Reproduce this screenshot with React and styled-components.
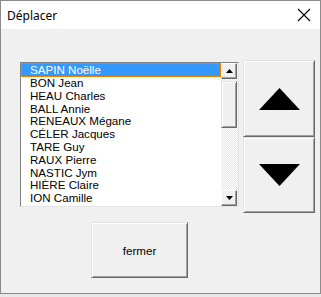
import React from "react";
import styled, { createGlobalStyle } from "styled-components";

const Global = createGlobalStyle`
  html, body { margin: 0; padding: 0; background: #e9e9e9; }
  * { box-sizing: border-box; }
`;

const Frame = styled.div`
  width: 321px;
  height: 294px;
  border: 1px solid #8c8c8c;
  background: #f0f0f0;
  display: flex;
  flex-direction: column;
`;

const TitleBar = styled.div`
  height: 28px;
  background: #fff;
  display: flex;
  align-items: center;
  justify-content: space-between;
  padding: 0 9px 0 6px;
  font-family: "Noto Sans", "Open Sans", sans-serif;
  font-size: 12px;
  color: #000;
`;

const Body = styled.div`
  flex: 1;
  display: flex;
  flex-direction: column;
  padding: 31px 0 0 19px;
`;

const Row = styled.div`
  display: flex;
  align-items: flex-start;
  gap: 4px;
`;

const ListBox = styled.div`
  margin-top: 2px;
  width: 219px;
  height: 145px;
  background: #fff;
  border-top: 1px solid #828282;
  border-left: 1px solid #828282;
  border-right: 1px solid #e3e3e3;
  border-bottom: 1px solid #e3e3e3;
  display: flex;
`;

const Items = styled.div`
  flex: 1;
  display: flex;
  flex-direction: column;
  font-family: "Liberation Sans", Arial, sans-serif;
  font-size: 11.6px;
  color: #000;
`;

const Item = styled.div`
  height: ${(p) => (p.$first ? 14 : 12.8)}px;
  line-height: ${(p) => (p.$first ? 14 : 12.8)}px;
  padding-left: 9px;
  white-space: nowrap;
  background: ${(p) => (p.$selected ? "#3399ff" : "transparent")};
  color: ${(p) => (p.$selected ? "#fff" : "#000")};
  outline: ${(p) => (p.$selected ? "1px dotted #ff8c00" : "none")};
  outline-offset: -1px;
`;

const ScrollBar = styled.div`
  width: 17px;
  display: flex;
  flex-direction: column;
  background-color: #fff;
  background-image: repeating-conic-gradient(#e6e6e6 0 25%, #fff 0 50%);
  background-size: 2px 2px;
`;

const ScrollBtn = styled.div`
  height: 16px;
  width: 16px;
  background: #f0f0f0;
  border-top: 1px solid #fff;
  border-left: 1px solid #fff;
  border-right: 1px solid #696969;
  border-bottom: 1px solid #696969;
  box-shadow: inset -1px -1px 0 #a0a0a0;
  display: flex;
  align-items: center;
  justify-content: center;
`;

const Thumb = styled.div`
  margin-top: 2px;
  height: 47px;
  width: 16px;
  background: #f0f0f0;
  border-top: 1px solid #e3e3e3;
  border-left: 1px solid #e3e3e3;
  border-right: 1px solid #696969;
  border-bottom: 1px solid #696969;
  box-shadow: inset 1px 1px 0 #fff, inset -1px -1px 0 #a0a0a0;
`;

const Spacer = styled.div`
  flex: 1;
`;

const ArrowCol = styled.div`
  display: flex;
  flex-direction: column;
  width: 72px;
`;

const Btn3D = styled.button`
  all: unset;
  box-sizing: border-box;
  width: ${(p) => p.$w}px;
  height: ${(p) => p.$h}px;
  background: #f0f0f0;
  border-top: 1px solid #e3e3e3;
  border-left: 1px solid #e3e3e3;
  border-right: 1px solid #696969;
  border-bottom: 1px solid #696969;
  box-shadow: inset 1px 1px 0 #fff, inset -1px -1px 0 #a0a0a0;
  display: flex;
  align-items: center;
  justify-content: center;
  font-family: "Liberation Sans", Arial, sans-serif;
  font-size: 11.6px;
  color: #000;
`;

const CloseRow = styled.div`
  margin-top: 9px;
  padding-left: 71px;
`;

const names = [
  "SAPIN Noëlle",
  "BON Jean",
  "HEAU Charles",
  "BALL Annie",
  "RENEAUX Mégane",
  "CÉLER Jacques",
  "TARE Guy",
  "RAUX Pierre",
  "NASTIC Jym",
  "HIÈRE Claire",
  "ION Camille",
];

export default function App() {
  return (
    <>
      <Global />
      <Frame>
        <TitleBar>
          <span>Déplacer</span>
          <svg width="14" height="14" viewBox="0 0 14 14">
            <path d="M1 1 L13 13 M13 1 L1 13" stroke="#000" strokeWidth="1.1" fill="none" />
          </svg>
        </TitleBar>
        <Body>
          <Row>
            <ListBox>
              <Items>
                {names.map((n, i) => (
                  <Item key={n} $selected={i === 0} $first={i === 0}>
                    {n}
                  </Item>
                ))}
              </Items>
              <ScrollBar>
                <ScrollBtn>
                  <svg width="7" height="4" viewBox="0 0 7 4">
                    <path d="M3.5 0 L7 4 L0 4 Z" fill="#000" />
                  </svg>
                </ScrollBtn>
                <Thumb />
                <Spacer />
                <ScrollBtn>
                  <svg width="7" height="4" viewBox="0 0 7 4">
                    <path d="M0 0 L7 0 L3.5 4 Z" fill="#000" />
                  </svg>
                </ScrollBtn>
              </ScrollBar>
            </ListBox>
            <ArrowCol>
              <Btn3D $w={72} $h={77}>
                <svg width="41" height="22" viewBox="0 0 41 22">
                  <path d="M20.5 0 L41 22 L0 22 Z" fill="#000" />
                </svg>
              </Btn3D>
              <Btn3D $w={72} $h={76}>
                <svg width="41" height="22" viewBox="0 0 41 22">
                  <path d="M0 0 L41 0 L20.5 22 Z" fill="#000" />
                </svg>
              </Btn3D>
            </ArrowCol>
          </Row>
          <CloseRow>
            <Btn3D $w={97} $h={56}>fermer</Btn3D>
          </CloseRow>
        </Body>
      </Frame>
    </>
  );
}
